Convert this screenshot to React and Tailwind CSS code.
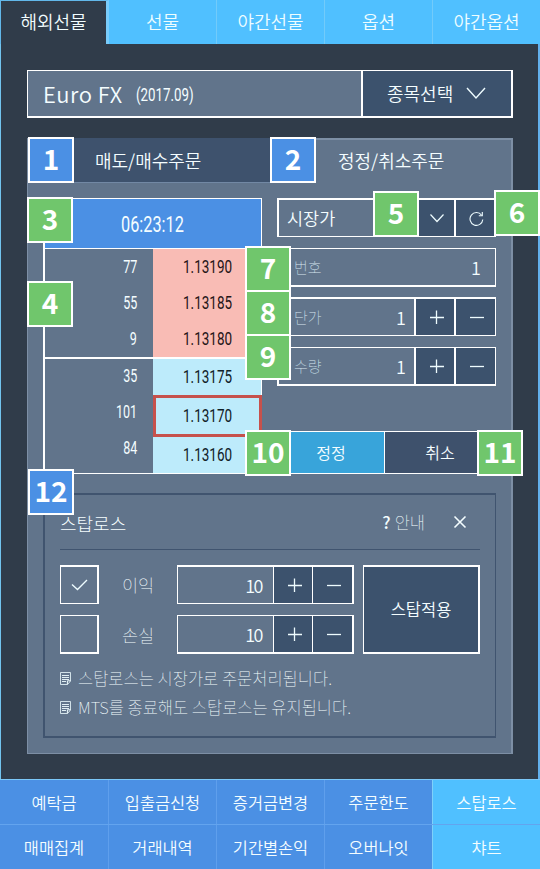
import React from "react";

const topTabs = ["선물", "야간선물", "옵션", "야간옵션"];
const footer = [
  ["예탁금", "입출금신청", "증거금변경", "주문한도", "스탑로스"],
  ["매매집계", "거래내역", "기간별손익", "오버나잇", "챠트"],
];

function Badge({ n, className }) {
  return (
    <div
      className={`absolute flex h-[46px] w-[46px] items-center justify-center border-2 border-white pb-[5px] text-[28px] leading-none font-bold text-white ${className}`}
    >
      {n}
    </div>
  );
}

function Num({ children, className = "" }) {
  return (
    <span className={`inline-block font-['Roboto','Liberation_Sans',sans-serif] font-normal ${className}`}>{children}</span>
  );
}

function Plus() {
  return (
    <svg width="14" height="14" viewBox="0 0 14 14" className="block" stroke="#eefcff" strokeWidth="1.3">
      <path d="M0 7.5H14M6.5 0.5V14" />
    </svg>
  );
}

function Minus() {
  return (
    <svg width="14" height="14" viewBox="0 0 14 14" className="block" stroke="#eefcff" strokeWidth="1.3">
      <path d="M0 7.5H14" />
    </svg>
  );
}

function NoteIcon() {
  return (
    <svg width="11" height="13" viewBox="0 0 11 13" className="block shrink-0" fill="none" stroke="#eefcff">
      <path d="M0.5 0.5H10.5V9L7.5 12.5H0.5Z" strokeOpacity="0.8" />
      <path d="M2 3.5H9M2 5.5H9M2 7.5H9M2 9.5H6" strokeWidth="0.9" />
      <path d="M10.5 8.8H7.4V12.3" />
    </svg>
  );
}

function Stepper({ label, className }) {
  return (
    <div className={`flex h-[39px] border-l-2 border-r border-white ${className}`}>
      <div className="flex flex-1 items-center justify-between pr-[8px] pl-[15px]">
        <span className="text-[15px] font-thin text-[#d6e6f0]">{label}</span>
        <span className="text-[18px] font-[350]">1</span>
      </div>
      <div className="flex w-10 items-center justify-center border-l-2 border-white bg-[#3c526d] pl-[3px]">
        <Plus />
      </div>
      <div className="flex w-[41px] items-center justify-center border-l-2 border-white bg-[#3c526d] pl-[2px]">
        <Minus />
      </div>
    </div>
  );
}

function StopInput({ className }) {
  return (
    <div className={`flex h-[39px] w-[177px] border-l border-r-2 border-white ${className}`}>
      <div className="flex flex-1 items-center justify-end pr-[11px] text-[18px] font-[350] tracking-[-1.5px]">10</div>
      <div className="flex w-[39px] items-center justify-center border-l border-white bg-[#3c526d] pl-[3px]">
        <Plus />
      </div>
      <div className="flex w-10 items-center justify-center border-l border-white bg-[#3c526d] pl-[2px]">
        <Minus />
      </div>
    </div>
  );
}

function Header() {
  return (
    <nav className="flex h-11 bg-[#50c0ff] text-[18px] leading-[42px] text-[#eefdff]">
      <div className="w-[109px] border-t border-r-3 border-l border-t-[#62b8ea] border-r-[#79ccfb] border-l-[#62b8ea] bg-[#303c4a] text-center leading-[40px] text-[#f2fdff]">
        해외선물
      </div>
      {topTabs.map((t, i) => (
        <div
          key={t}
          className={`text-center ${i === 0 ? "w-[107px]" : "w-[108px]"} ${i > 0 ? "border-l border-[#72cbfa]" : ""}`}
        >
          {t}
        </div>
      ))}
    </nav>
  );
}

function PriceTable() {
  const price = "origin-right scale-x-[0.71] text-[19px]";
  const qty = "origin-right scale-x-[0.66] text-[19px]";
  return (
    <div className="flex h-[276px] w-[219px] flex-col border-t border-r border-b border-l-2 border-white">
      <div className="flex h-[50px] items-center justify-center border-b border-white bg-[#4b90e4] pt-[2px] pr-[2px]">
        <Num className="scale-x-[0.74] text-[22px] whitespace-nowrap">06:23:12</Num>
      </div>
      <div className="flex h-[110px] border-b-2 border-white">
        <div className="flex w-[108px] flex-col items-end pr-[16px] leading-[36px]">
          {["77", "55", "9"].map((v) => (
            <Num key={v} className={qty}>{v}</Num>
          ))}
        </div>
        <div className="flex flex-1 flex-col items-end bg-[#f9bcb5] pr-[29px] leading-[36px] text-[#241417]">
          {["1.13190", "1.13185", "1.13180"].map((v) => (
            <Num key={v} className={price}>{v}</Num>
          ))}
        </div>
      </div>
      <div className="flex h-[114px]">
        <div className="-mt-px flex w-[108px] flex-col items-end pr-[16px] leading-[36px]">
          {["35", "101", "84"].map((v) => (
            <Num key={v} className={qty}>{v}</Num>
          ))}
        </div>
        <div className="flex flex-1 flex-col bg-[#bdebfb] text-[#102027]">
          <div className="h-9 pr-[29px] text-right leading-[34px]">
            <Num className={price}>1.13175</Num>
          </div>
          <div className="-mr-px h-[42px] border-3 border-[#c6514c] pr-[27px] text-right leading-[34px]">
            <Num className={price}>1.13170</Num>
          </div>
          <div className="h-9 pr-[29px] text-right leading-[34px]">
            <Num className={price}>1.13160</Num>
          </div>
        </div>
      </div>
    </div>
  );
}

function OrderForm() {
  return (
    <div className="flex w-[219px] flex-col">
      <div className="flex h-[39px] border-t-2 border-r border-b border-l-2 border-white">
        <div className="flex flex-1 items-center pl-[8px] text-[17.5px]">시장가</div>
        <div className="flex w-10 items-center justify-center border-l-2 border-white bg-[#3c526d] pl-[3px]">
          <svg width="14" height="9" viewBox="0 0 14 9" fill="none" stroke="#eefcff" strokeWidth="1.2">
            <path d="M0.5 0.5L7 7.5L13.5 0.5" />
          </svg>
        </div>
        <div className="flex w-[41px] items-center justify-center border-l-2 border-white bg-[#3c526d] pl-[2px]">
          <svg width="15" height="15" viewBox="0 0 15 15" fill="none" stroke="#eefcff" strokeWidth="1.1">
            <path d="M13.8 8.5A6.4 6.4 0 1 1 12.6 4.2" />
            <path d="M13.3 1V4.7H9.8" />
          </svg>
        </div>
      </div>
      <div className="mt-[11px] flex h-[39px] items-center justify-between border-t border-r border-b-2 border-l-2 border-white pr-[14px] pl-[15px]">
        <span className="text-[15px] font-thin text-[#d6e6f0]">번호</span>
        <span className="text-[18px] font-[350]">1</span>
      </div>
      <Stepper label="단가" className="mt-[10px] border-t-2 border-b" />
      <Stepper label="수량" className="mt-[11px] border-t border-b-2" />
      <div className="mt-[45px] flex h-[43px] border border-white text-[16px] leading-[41px]">
        <div className="w-[106px] bg-[#38a4da] text-center">정정</div>
        <div className="flex-1 border-l border-white bg-[#3e516c] text-center">취소</div>
      </div>
    </div>
  );
}

function StopLoss() {
  return (
    <section className="mx-[15px] mt-[19px] h-[245px] border-t-2 border-r border-b-2 border-l-2 border-[#40546f] pr-[15px] pl-[15px]">
      <div className="flex h-[55px] items-center border-b border-[#40546f]">
        <span className="pt-[3px] text-[18px] font-light">스탑로스</span>
        <span className="ml-auto text-[17px] font-medium">?</span>
        <span className="ml-[4px] text-[16.5px] font-thin">안내</span>
        <svg width="14" height="14" viewBox="0 0 14 14" className="mr-[13px] ml-[28px]" stroke="#f4fdff" strokeWidth="1.6">
          <path d="M1.5 1.5L12.5 12.5M12.5 1.5L1.5 12.5" />
        </svg>
      </div>
      <div className="mt-[15px] flex">
        <div className="flex w-[39px] flex-col gap-[11px]">
          <div className="flex h-[39px] items-center justify-center border border-t-2 border-r-2 border-white">
            <svg width="17" height="12" viewBox="0 0 17 12" fill="none" stroke="#eefcff" strokeWidth="1.4">
              <path d="M1 5.5L6.5 10.5L16 1" />
            </svg>
          </div>
          <div className="h-[39px] border border-r-2 border-b-2 border-white" />
        </div>
        <div className="flex w-[78px] flex-col gap-[11px] text-center text-[17.5px] leading-[39px] font-thin">
          <span>이익</span>
          <span>손실</span>
        </div>
        <div className="flex flex-col gap-[11px]">
          <StopInput className="border-t-2 border-b" />
          <StopInput className="border-t border-b-2" />
        </div>
        <div className="ml-[9px] flex w-[117px] items-center justify-center border-t-2 border-r-2 border-b-2 border-l border-white bg-[#3c526d] text-[16.5px]">
          스탑적용
        </div>
      </div>
      <div className="mt-[10px] text-[16.5px] leading-[29px] font-thin whitespace-nowrap">
        <div className="flex items-center gap-[7px]">
          <NoteIcon />
          <span>스탑로스는 시장가로 주문처리됩니다.</span>
        </div>
        <div className="flex items-center gap-[7px]">
          <NoteIcon />
          <span>MTS를 종료해도 스탑로스는 유지됩니다.</span>
        </div>
      </div>
    </section>
  );
}

export default function App() {
  return (
    <div className="relative h-[869px] w-[540px] overflow-hidden bg-[#303c4a] font-['Noto_Sans_CJK_KR',sans-serif] font-[350] text-[#f4fdff]">
      <Header />
      <main className="h-[735px] border-r-2 border-l border-r-[#62b0ed] border-l-[#72c4ee] pt-[26px] pr-[25px] pl-[26px]">
        <div className="flex h-12 w-[486px] border-t border-r-2 border-b-2 border-l border-white bg-[#61748b]">
          <div className="flex flex-1 items-center pb-px pl-[15px]">
            <span className="text-[22px] tracking-[0.5px]">Euro FX</span>
            <Num className="ml-[13px] origin-left scale-x-[0.74] pt-[3px] text-[18px]">(2017.09)</Num>
          </div>
          <div className="flex w-[150px] items-center border-l-2 border-white bg-[#3c526d] pl-[24px] text-[18px]">
            종목선택
            <svg width="20" height="13" viewBox="0 0 20 13" className="ml-[13px]" fill="none" stroke="#eefcff" strokeWidth="1.4">
              <path d="M1 1L10 11L19 1" />
            </svg>
          </div>
        </div>
        <div className="mt-5 h-[616px] w-[486px] border-r-2 border-b border-l border-[#7d8fa5] bg-[#61748b]">
          <div className="flex h-[45px] text-[18px] leading-[44px]">
            <div className="w-[243px] border-b border-[#7288a4] bg-[#3e526d] pl-[67px]">매도/매수주문</div>
            <div className="flex-1 border-t-2 border-[#7d8fa5] pl-[67px] leading-[41px]">정정/취소주문</div>
          </div>
          <div className="flex justify-between pt-[15px] pr-[15px] pl-[15px]">
            <PriceTable />
            <OrderForm />
          </div>
          <StopLoss />
        </div>
      </main>
      <footer className="h-[90px] border-t border-[#7cc8f8] bg-[#4b90e4] text-[16.4px] leading-[45px]">
        {footer.map((row, r) => (
          <div key={r} className={`flex ${r === 0 ? "h-[45px] border-b border-[#63a4ee]" : "h-11"}`}>
            {row.map((t, i) => (
              <div
                key={t}
                className={`w-[108px] text-center ${i > 0 ? "border-l" : ""} ${
                  i === 4 ? "border-[#7ed0fa] bg-[#50c0ff]" : "border-[#5f9fec]"
                }`}
              >
                {t}
              </div>
            ))}
          </div>
        ))}
      </footer>
      <Badge n="1" className="top-[137px] left-[28px] bg-[#4b90e4]" />
      <Badge n="2" className="top-[137px] left-[270px] bg-[#4b90e4]" />
      <Badge n="3" className="top-[197px] left-[27px] bg-[#70c66c]" />
      <Badge n="4" className="top-[281px] left-[27px] bg-[#70c66c]" />
      <Badge n="5" className="top-[191px] left-[373px] bg-[#70c66c]" />
      <Badge n="6" className="top-[190px] left-[494px] bg-[#70c66c]" />
      <Badge n="7" className="top-[246px] left-[245px] bg-[#70c66c]" />
      <Badge n="8" className="top-[290px] left-[245px] bg-[#70c66c]" />
      <Badge n="9" className="top-[334px] left-[245px] bg-[#70c66c]" />
      <Badge n="10" className="top-[430px] left-[245px] bg-[#70c66c]" />
      <Badge n="11" className="top-[430px] left-[477px] bg-[#70c66c]" />
      <Badge n="12" className="top-[469px] left-[28px] bg-[#4b90e4]" />
    </div>
  );
}
